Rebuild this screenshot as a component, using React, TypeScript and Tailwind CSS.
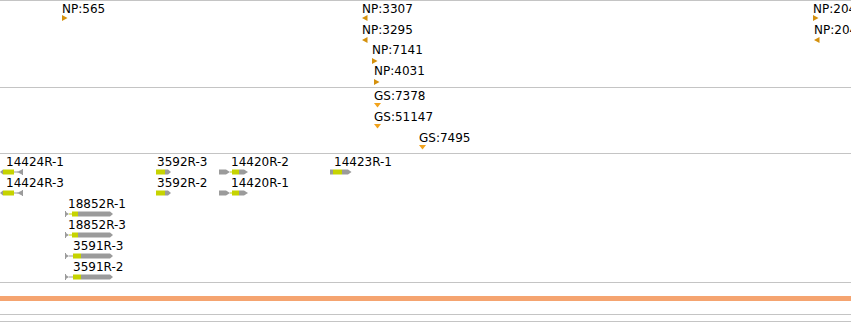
import React from "react";

const Y = "#c6d300";
const G = "#9b9b9b";
const NPC = "#d4900c";
const GSC = "#f2a31c";

type Marker = { label: string; x: number; cap: number; tx: number; ty: number; dir: "r" | "l" | "d" };

const track1: Marker[] = [
  { label: "NP:565", x: 62, cap: 4, tx: 62, ty: 15, dir: "r" },
  { label: "NP:3307", x: 362, cap: 4, tx: 362, ty: 15, dir: "l" },
  { label: "NP:3295", x: 362, cap: 25, tx: 362, ty: 37, dir: "l" },
  { label: "NP:7141", x: 372, cap: 45, tx: 372, ty: 58, dir: "r" },
  { label: "NP:4031", x: 374, cap: 66, tx: 374, ty: 79, dir: "r" },
  { label: "NP:2046", x: 813, cap: 4, tx: 813, ty: 15, dir: "r" },
  { label: "NP:2047", x: 814, cap: 25, tx: 814, ty: 37, dir: "l" },
];

const track2: Marker[] = [
  { label: "GS:7378", x: 374, cap: 91, tx: 374, ty: 103, dir: "d" },
  { label: "GS:51147", x: 374, cap: 112, tx: 374, ty: 124, dir: "d" },
  { label: "GS:7495", x: 419, cap: 133, tx: 419, ty: 145, dir: "d" },
];

type Gene = { label: string; x: number; cap: number; gx: number; gy: number; kind: string };

const genes: Gene[] = [
  { label: "14424R-1", x: 6, cap: 157, gx: 0, gy: 169, kind: "A" },
  { label: "14424R-3", x: 6, cap: 178, gx: 0, gy: 190, kind: "A" },
  { label: "3592R-3", x: 157, cap: 157, gx: 156, gy: 169, kind: "B" },
  { label: "3592R-2", x: 157, cap: 178, gx: 156, gy: 190, kind: "B" },
  { label: "14420R-2", x: 231, cap: 157, gx: 219, gy: 169, kind: "C" },
  { label: "14420R-1", x: 231, cap: 178, gx: 219, gy: 190, kind: "C" },
  { label: "14423R-1", x: 334, cap: 157, gx: 330, gy: 169, kind: "D" },
  { label: "18852R-1", x: 68, cap: 199, gx: 65, gy: 211, kind: "E" },
  { label: "18852R-3", x: 68, cap: 220, gx: 65, gy: 232, kind: "E" },
  { label: "3591R-3", x: 73, cap: 241, gx: 65, gy: 253, kind: "F" },
  { label: "3591R-2", x: 73, cap: 262, gx: 65, gy: 274, kind: "F" },
];

function Label({ text, x, cap, top }: { text: string; x: number; cap: number; top: number }) {
  return (
    <span
      className="absolute whitespace-nowrap text-[12px] leading-[14px] text-black"
      style={{ left: x, top: cap - 2.5 - top }}
    >
      {text}
    </span>
  );
}

function Tri({ m, top }: { m: Marker; top: number }) {
  if (m.dir === "d") {
    return (
      <svg className="absolute" style={{ left: m.tx, top: m.ty - top }} width="7" height="5">
        <polygon points="0,0 7,0 3.5,4.5" fill={GSC} />
      </svg>
    );
  }
  return (
    <svg className="absolute" style={{ left: m.tx, top: m.ty - top }} width="6" height="6">
      {m.dir === "r" ? (
        <polygon points="0,0 5.5,3 0,6" fill={NPC} />
      ) : (
        <polygon points="5.5,0 0,3 5.5,6" fill={NPC} />
      )}
    </svg>
  );
}

function Glyph({ kind }: { kind: string }) {
  switch (kind) {
    case "A":
      return (
        <svg width="24" height="6">
          <polygon points="0,3 3,0.5 3,5.5" fill={G} />
          <rect x="3" y="0.5" width="11" height="5" fill={Y} />
          <rect x="14" y="2.5" width="4" height="1" fill={G} />
          <polygon points="17,3 22,0.5 22,5.5" fill={G} />
          <rect x="22" y="0" width="1" height="6" fill={G} />
        </svg>
      );
    case "B":
      return (
        <svg width="16" height="6">
          <rect x="0" y="0.5" width="9" height="5" fill={Y} />
          <polygon points="9,0.5 12,0.5 15,3 12,5.5 9,5.5" fill={G} />
        </svg>
      );
    case "C":
      return (
        <svg width="30" height="6">
          <polygon points="0,0.5 7,0.5 11,3 7,5.5 0,5.5" fill={G} />
          <rect x="11" y="2.5" width="3" height="1" fill={Y} />
          <rect x="13" y="0.5" width="7" height="5" fill={Y} />
          <polygon points="20,0.5 25,0.5 29,3 25,5.5 20,5.5" fill={G} />
        </svg>
      );
    case "D":
      return (
        <svg width="22" height="6">
          <rect x="0" y="0.5" width="3" height="5" fill={G} />
          <rect x="3" y="0.5" width="9" height="5" fill={Y} />
          <polygon points="12,0.5 18,0.5 21.5,3 18,5.5 12,5.5" fill={G} />
        </svg>
      );
    case "E":
      return (
        <svg width="49" height="6">
          <polygon points="0,0.5 4,3 0,5.5" fill={G} />
          <rect x="0" y="0" width="1" height="6" fill={G} />
          <rect x="4" y="2.5" width="3" height="1" fill={Y} />
          <rect x="7" y="0.5" width="6" height="5" fill={Y} />
          <polygon points="13,0.5 45,0.5 48,3 45,5.5 13,5.5" fill={G} />
        </svg>
      );
    default:
      return (
        <svg width="49" height="6">
          <polygon points="0,0.5 4,3 0,5.5" fill={G} />
          <rect x="0" y="0" width="1" height="6" fill={G} />
          <rect x="4" y="2.5" width="4" height="1" fill={G} />
          <rect x="8" y="0.5" width="8" height="5" fill={Y} />
          <polygon points="16,0.5 45,0.5 48,3 45,5.5 16,5.5" fill={G} />
        </svg>
      );
  }
}

function MarkerTrack({ items, top, h }: { items: Marker[]; top: number; h: string }) {
  return (
    <div className={`relative ${h} border-t border-[#c4c4c4]`}>
      {items.map((m) => (
        <React.Fragment key={m.label + m.cap}>
          <Label text={m.label} x={m.x} cap={m.cap} top={top} />
          <Tri m={m} top={top} />
        </React.Fragment>
      ))}
    </div>
  );
}

export default function App() {
  return (
    <div className="relative h-[322px] w-[851px] overflow-hidden bg-white font-['DejaVu_Sans',sans-serif]">
      <MarkerTrack items={track1} top={1} h="h-[87px]" />
      <MarkerTrack items={track2} top={88} h="h-[66px]" />
      <div className="relative h-[129px] border-t border-[#c4c4c4]">
        {genes.map((g) => (
          <React.Fragment key={g.label}>
            <Label text={g.label} x={g.x} cap={g.cap} top={154} />
            <div className="absolute flex" style={{ left: g.gx, top: g.gy - 154 }}>
              <Glyph kind={g.kind} />
            </div>
          </React.Fragment>
        ))}
      </div>
      <div className="h-[14px] border-t border-[#c4c4c4]" />
      <div className="h-[5px] bg-[#f5a470]" />
      <div className="h-[13px]" />
      <div className="h-[7px] border-t border-[#c4c4c4]" />
      <div className="h-[1px] border-t border-[#c4c4c4]" />
    </div>
  );
}
